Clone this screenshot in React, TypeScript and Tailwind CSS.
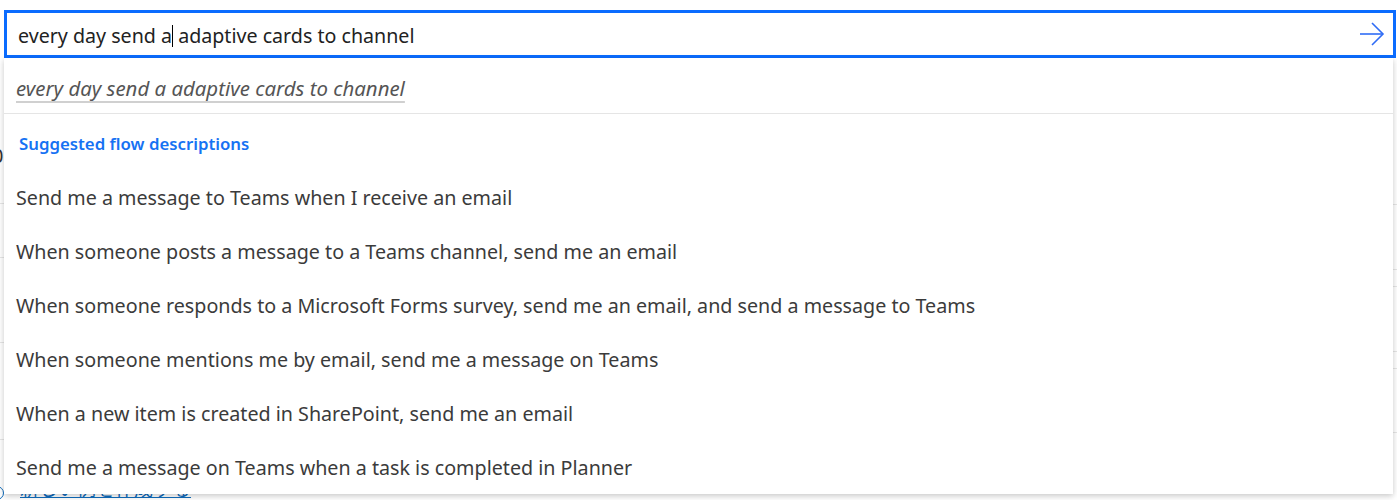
import React from "react";

const items = [
  "Send me a message to Teams when I receive an email",
  "When someone posts a message to a Teams channel, send me an email",
  "When someone responds to a Microsoft Forms survey, send me an email, and send a message to Teams",
  "When someone mentions me by email, send me a message on Teams",
  "When a new item is created in SharePoint, send me an email",
  "Send me a message on Teams when a task is completed in Planner",
];

export default function App() {
  return (
    <div
      className="relative w-[1397px] h-[500px] overflow-hidden bg-white"
      style={{ fontFamily: '"Noto Sans", "Open Sans", sans-serif' }}
    >
      {/* background page peeking out */}
      <div className="flex h-full">
        <div className="w-[6px] flex flex-col text-[20px] text-[#333] overflow-hidden">
          <div className="h-[150px]" />
          <div className="h-[75px] border-b border-[#e6e6e6] -ml-[8px] leading-[40px]">0</div>
          <div className="h-[60px] border-b border-[#e6e6e6] -ml-[8px] leading-[44px]">t</div>
          <div className="h-[85px] border-b border-[#e6e6e6] -ml-[8px] leading-[92px]">t</div>
          <div className="h-[100px] border-b border-[#e6e6e6] -ml-[8px] leading-[96px]">t</div>
          <div className="flex items-center gap-[8px] -ml-[10px] mt-[46px]">
            <div className="w-[14px] h-[14px] rounded-full border border-[#0f6cbd]" />
          </div>
        </div>
        <div className="flex-1 flex flex-col">
          <div className="h-[490px]" />
          <div className="pl-[14px] text-[19px] text-[#0f6cbd] underline leading-[24px]" style={{ fontFamily: '"Noto Sans CJK JP", sans-serif' }}>
            新しい例を作成する
          </div>
        </div>
        <div className="w-[6px] flex flex-col">
          <div className="h-[205px] border-b border-[#e6e6e6]" />
          <div className="h-[65px] border-b border-[#e6e6e6]" />
          <div className="h-[17px] border-b border-[#e6e6e6]" />
          <div className="h-[65px] border-b border-[#e6e6e6]" />
          <div className="h-[17px] border-b border-[#e6e6e6]" />
          <div className="h-[64px] border-b border-[#e6e6e6]" />
        </div>
      </div>

      {/* search box + suggestions overlay */}
      <div className="absolute left-[4px] top-[10px] w-[1392px]">
        <div className="h-[48px] border-[3px] border-[#0b6cff] bg-white flex items-center pl-[11px] pr-[8px]">
          <div className="flex-1 text-[19.65px] text-[#222] leading-[28px] whitespace-pre pt-[4px]">
            every day send a<span className="inline-block w-px h-[22px] bg-black align-[-4px]" /> adaptive cards to channel
          </div>
          <svg width="26" height="24" viewBox="0 0 26 24" fill="none" stroke="#2f6cf5" strokeWidth="1.6">
            <path d="M1 12 H24" />
            <path d="M13 1 L24 12 L13 23" />
          </svg>
        </div>
        <div className="w-[1389px] bg-white shadow-[0_2px_6px_rgba(0,0,0,0.22)]">
          <div className="h-[56px] border-b border-[#e5e5e5] flex items-center pl-[12px] pt-[5px]">
            <span className="italic text-[20.4px] text-[#555] underline decoration-[#d0d0d0] underline-offset-[5px]">
              every day send a adaptive cards to channel
            </span>
          </div>
          <div className="h-[56px] flex items-center pl-[15px] pt-[3px]">
            <span className="text-[16.8px] font-semibold text-[#1672f3]">Suggested flow descriptions</span>
          </div>
          <div className="flex flex-col">
            {items.map((t) => (
              <div key={t} className="h-[54px] flex items-center pl-[12px] pt-[1px] text-[19.7px] text-[#3b3b3b]">
                {t}
              </div>
            ))}
          </div>
        </div>
      </div>
    </div>
  );
}
